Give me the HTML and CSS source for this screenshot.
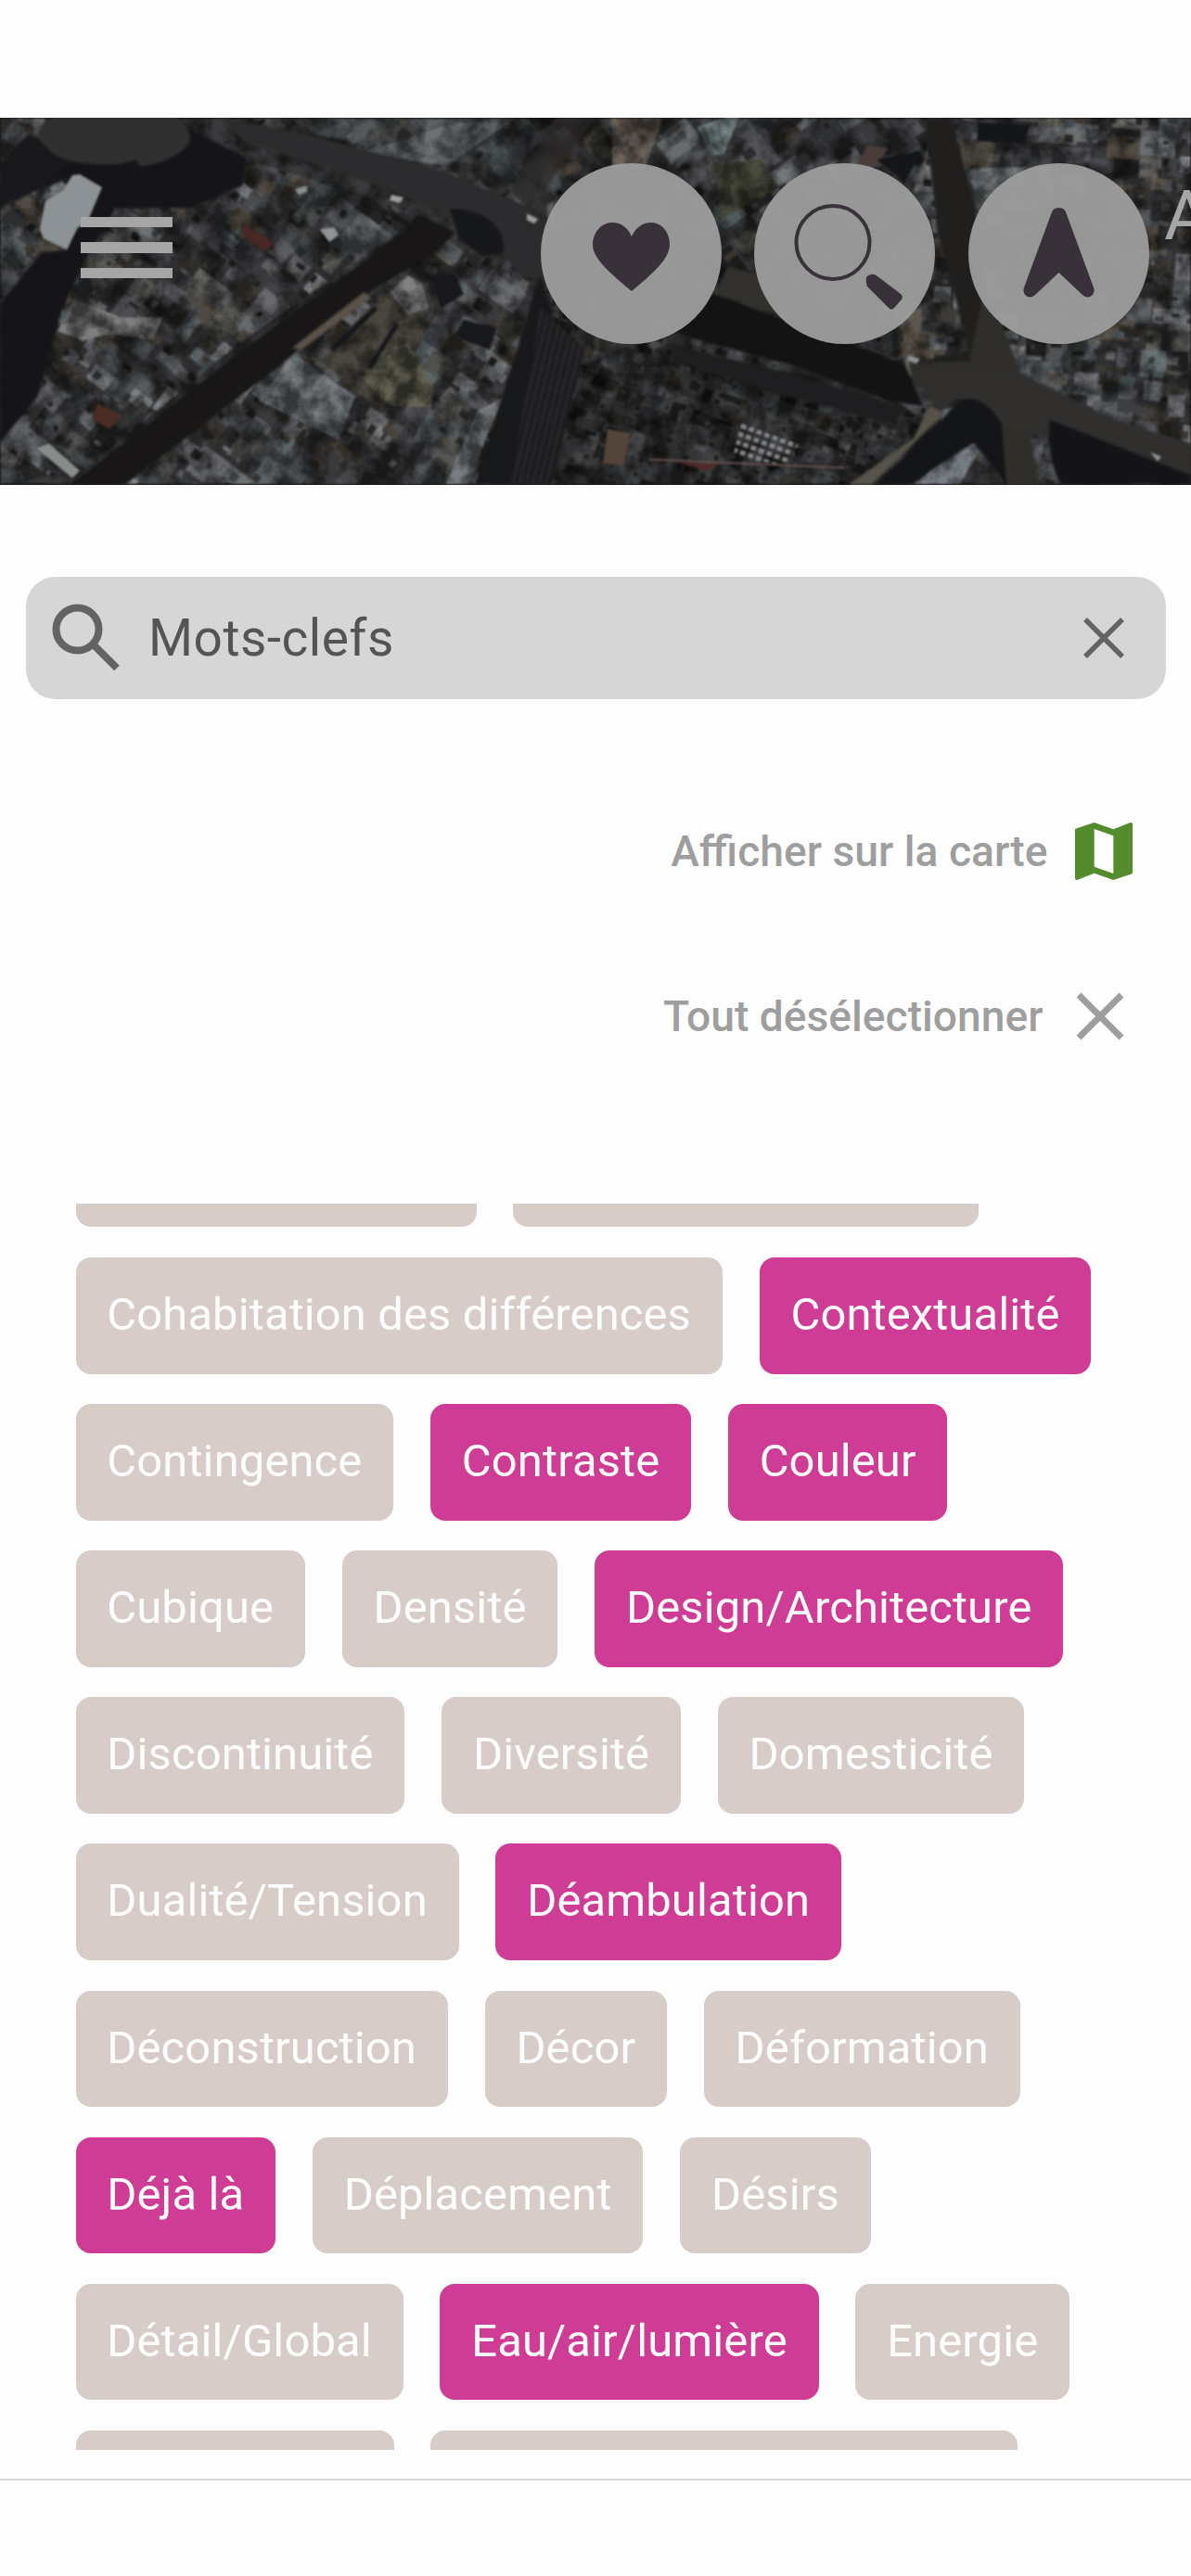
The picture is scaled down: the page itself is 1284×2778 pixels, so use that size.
FILE: index.html
```html
<!DOCTYPE html>
<html lang="fr">

<head>
  <meta charset="UTF-8" />
  <meta name="viewport" content="width=device-width, initial-scale=1.0" />
  <title>Mots-clefs</title>
  <link rel="stylesheet" href="styles.css">
</head>

<body>
  <header class="banner">
    <!-- aerial view behind the toolbar -->
    <svg class="banner-map" viewBox="0 0 1284 395" preserveAspectRatio="none" aria-hidden="true">
      <defs>
        <filter id="grain" x="0" y="0" width="100%" height="100%" color-interpolation-filters="sRGB">
          <feGaussianBlur in="SourceGraphic" stdDeviation="1.3" result="soft" />
          <feTurbulence type="fractalNoise" baseFrequency="0.04" numOctaves="4" seed="4" />
          <feColorMatrix values="2.6 0 0 0 -.8  2.6 0 0 0 -.8  2.6 0 0 0 -.8  0 0 0 0 1" result="noise" />
          <feComposite in="soft" in2="noise" operator="arithmetic" k1="0.8" k2="0.62" />
          <feComposite in2="soft" operator="in" />
        </filter>
        <pattern id="tracks" width="7" height="20" patternUnits="userSpaceOnUse" patternTransform="rotate(14)">
          <rect width="3" height="20" fill="#29292b" />
        </pattern>
        <pattern id="windows" width="9" height="9" patternUnits="userSpaceOnUse" patternTransform="rotate(20)">
          <rect width="6" height="5" fill="#85878a" />
        </pattern>
        <clipPath id="blockWest">
          <path d="M268 45L455 106 255 245 90 380 0 395V0H90L130 90 205 98z" />
        </clipPath>
        <clipPath id="blockSouth">
          <path d="M300 262L480 130 600 150 535 395H120z" />
        </clipPath>
        <clipPath id="blockNorth">
          <path d="M240 0H1010V150L960 250 760 190 600 120z" />
        </clipPath>
        <clipPath id="blockStation">
          <path d="M600 170L760 190 985 268 1010 310 940 395H545z" />
        </clipPath>
        <clipPath id="blockEast">
          <path d="M1010 0H1284V395H1090L960 300 940 220z" />
        </clipPath>
      </defs>

      <g filter="url(#grain)">
        <rect width="1284" height="395" fill="#29292b" />
        <g id="roofs"></g>

        <!-- large roofs -->
        <path d="M310 0H556L486 50 340 18z" fill="#404345" opacity=".6" />
        <path d="M490 5L550 5 480 52 390 38z" fill="#4b4f52" />
        <path d="M315 253L383 300 365 347 280 305z" fill="#54585b" />
        <path d="M430 170L462 178 455 240 415 320 345 262z" fill="#35322d" />
        <path d="M406 252L440 243 468 290 465 312 420 310 390 280z" fill="#46453b" />
        <path d="M80 195L130 215 175 215 165 240 120 232 90 240 62 230z" fill="#59595a" />
        <path d="M440 170L455 178 462 205 440 212 420 188z" fill="#5a5b5c" />
        <path d="M365 127L395 105 420 125 385 155z" fill="#4b4e51" />
        <path d="M545 300L530 330 505 395H480L515 315z" fill="#56595c" />
        <path d="M660 0L715 0 695 55 660 60z" fill="#4d4640" />
        <path d="M752 10L800 -8 780 40 765 40z" fill="#566062" />
        <path d="M770 50L820 45 840 75 775 110z" fill="#32342a" />
        <path d="M1045 55L1130 52 1140 95 1055 105z" fill="#54585a" />
        <path d="M985 395L1035 350 1060 350 1035 395z" fill="#54585d" />
      </g>

      <!-- avenues -->
      <g class="avenues">
        <path d="M240 0L340 20 480 58 590 105 640 175 760 190 765 225 560 170 520 120 400 70 262 25z" fill="#2c2c2e" />
        <path d="M600 0H640L590 75 590 115 550 80z" fill="#2a2725" opacity=".75" />
        <path d="M88 386L262 250 381 163 455 106 491 123 470 145 393 190 303 266 135 395H75z" fill="#181616" />
        <path d="M315 248L392 188 400 193 325 250z" fill="#5b534a" />
        <path d="M358 250L405 205M398 270L428 222" stroke="#141519" stroke-width="5" />
        <path d="M0 50L30 18 66 30 92 58 0 95z" fill="#18181b" />
        <path d="M62 60L85 40 200 10 265 43 262 73 205 97 125 97 90 155 66 210 40 300 0 350V200L45 145 72 142 95 75z" fill="#151519" />
        <path d="M40 20C45-25 200-25 205 20 206 37 170 52 150 52L147 45 130 50C80 51 60 48 40 20z" fill="#2f302f" />
        <path d="M485 98C520 98 545 115 543 145L520 150 495 130z" fill="#161719" />
        <path d="M582 170L596 210 552 395H512L545 290z" fill="#17181a" />
        <path d="M583 205L630 250 595 395H550z" fill="#1b1b1d" />
        <path d="M583 205L630 250 595 395H550z" fill="url(#tracks)" />
        <path d="M765 188L880 230 975 265 995 310 960 305 850 265 720 230 750 205z" fill="#131314" />
        <path d="M725 245L850 275 975 312 965 330 850 300 725 262z" fill="#1e1e20" />
        <path d="M785 160L850 180 930 225 900 232 770 190z" fill="#33312d" />
        <path d="M998 0H1025L1050 90 1062 180 1078 260 985 265 1045 250 1010 120z" fill="#211f1d" />
        <path d="M1062 180L1095 260 1120 395H1085L1065 300 985 290 980 265 1045 262z" fill="#2f2e2b" />
        <path d="M990 268L1100 275 1200 325 1284 350V385L1080 330 1035 300 1010 320z" fill="#302f2d" />
        <path d="M1030 310C1045 292 1070 310 1080 330L1085 395 1050 350 980 395H945z" fill="#141519" />
        <path d="M1132 325L1284 385V395H1145C1130 375 1130 340 1132 325z" fill="#141418" />
        <path d="M1002 310L1018 318 940 395H915L985 345z" fill="#57534a" />
      </g>

      <!-- courtyards and bright spots -->
      <g class="spots">
        <path d="M86 61L110 75 93 115 84 118 72 142 47 130 43 120 49 90 68 78 78 62z" fill="#8c9295" />
        <path d="M53 351L86 380 78 388 39 356z" fill="#8a8c8c" />
        <path d="M345 120L360 118 365 126 355 134z" fill="#8f9494" />
        <path d="M422 83L435 86 431 92 420 89zM568 103L580 109 576 114 568 110z" fill="#9a9b9a" />
        <path d="M318 77L331 73 331 80 322 83z" fill="#8a8d90" />
        <path d="M263 115L295 135 285 143 260 125z" fill="#4a2826" />
        <path d="M105 308L132 320 118 335 100 325z" fill="#4b2d25" />
        <path d="M935 30L957 33 945 52 925 50z" fill="#4c3d3a" />
        <path d="M655 335L680 340 672 375 650 372z" fill="#54453a" />
        <path d="M465 170L490 168 500 190 475 205zM500 218L535 226 528 250 490 235z" fill="#17181b" />
        <path d="M1055 5L1110 8 1105 28 1053 25zM945 45L995 35 975 70z" fill="#151619" />
        <path d="M800 325L862 348 850 375 790 365z" fill="url(#windows)" />
        <path d="M980 256L992 260 988 265 978 261zM1240 360L1252 365 1248 370z" fill="#8f9292" />
        <path d="M700 368L910 377" stroke="#66514e" stroke-width="2" />
        <path d="M730 371L775 373 762 380z" fill="#522a2a" />
      </g>
    </svg>

    <div class="toolbar">
      <button class="menu-btn" aria-label="Menu">
        <span></span>
        <span></span>
        <span></span>
      </button>

      <div class="actions">
        <button class="round-btn" aria-label="Favoris">
          <svg viewBox="0 0 195 195">
            <path d="M98 138C79 122 56 104 56 88C56 75 65 64 77 64C87 64 94 70 98 79C102 70 109 64 119 64C131 64 139 75 139 88C139 104 117 122 98 138Z" />
          </svg>
        </button>
        <button class="round-btn" aria-label="Rechercher">
          <svg viewBox="0 0 195 195">
            <circle class="lens" cx="85" cy="85.5" r="39.5" />
            <path d="M121 129Q119 121 126 120Q130 119 133 122L158 141Q161 144 159 147L151 156Q148 159 145 156L123 134Q121 132 121 129Z" />
          </svg>
        </button>
        <button class="round-btn" aria-label="Position">
          <svg viewBox="0 0 195 195">
            <path d="M89.500 54Q91 48 97.500 48Q104 48 105.500 54L135 134Q137 140 132 143.500Q127 146 123 142L97.500 118L72 142Q68 146 63 143.500Q58 140 60 134Z" />
          </svg>
        </button>
      </div>

      <span class="tab-label">A</span>
    </div>
  </header>

  <main>
    <div class="search-bar">
      <svg class="search-icon" viewBox="0 0 74 74">
        <circle cx="27.500" cy="27.500" r="23" />
        <path d="M46 45.500L70 69.500" />
      </svg>
      <span class="search-text">Mots-clefs</span>
      <svg class="clear-icon" viewBox="0 0 44 44">
        <path d="M2 2L42 42M42 2L2 42" />
      </svg>
    </div>

    <div class="links">
      <div class="link">
        <span>Afficher sur la carte</span>
        <svg class="map-icon" viewBox="3 3 18 18">
          <path d="M20.500 3l-.16.03L15 5.100 9 3 3.360 4.900c-.21.07-.36.25-.36.48V20.500c0 .28.22.5.5.5l.16-.03L9 18.900l6 2.100 5.640-1.900c.21-.07.36-.25.36-.48V3.500c0-.28-.22-.5-.5-.5zM15 19l-6-2.110V5l6 2.110V19z" />
        </svg>
      </div>
      <div class="link link-reset">
        <span>Tout désélectionner</span>
        <svg class="cross-icon" viewBox="0 0 52 52">
          <path d="M3 3L49 49M49 3L3 49" />
        </svg>
      </div>
    </div>

    <div class="keywords">
      <div class="chips">
        <span class="chip chip-a"></span>
        <span class="chip chip-b"></span>
        <span class="chip">Cohabitation des différences</span>
        <span class="chip selected">Contextualité</span>
        <span class="chip">Contingence</span>
        <span class="chip selected">Contraste</span>
        <span class="chip selected">Couleur</span>
        <span class="chip">Cubique</span>
        <span class="chip">Densité</span>
        <span class="chip selected">Design/Architecture</span>
        <span class="chip">Discontinuité</span>
        <span class="chip">Diversité</span>
        <span class="chip">Domesticité</span>
        <span class="chip">Dualité/Tension</span>
        <span class="chip selected">Déambulation</span>
        <span class="chip">Déconstruction</span>
        <span class="chip">Décor</span>
        <span class="chip">Déformation</span>
        <span class="chip selected">Déjà là</span>
        <span class="chip">Déplacement</span>
        <span class="chip">Désirs</span>
        <span class="chip">Détail/Global</span>
        <span class="chip selected">Eau/air/lumière</span>
        <span class="chip">Energie</span>
        <span class="chip chip-c"></span>
        <span class="chip chip-d"></span>
      </div>
    </div>
  </main>

  <script src="roofs.js"></script>
</body>

</html>
```
FILE: styles.css
```css
* {
  box-sizing: border-box;
}

body {
  font-family: Roboto, sans-serif;
  margin: 0;
  padding-top: 127px;
  background: #fefefe;
  height: 2778px;
  overflow: hidden;
}

button {
  border: none;
  padding: 0;
  background: none;
}

.banner {
  position: relative;
  height: 395.5px;
  overflow: hidden;
  background: #222;
}

.banner-map {
  position: absolute;
  inset: 0;
  width: 100%;
  height: 100%;
}

.avenues {
  filter: blur(1.5px);
}

.spots {
  filter: blur(0.8px);
}

.toolbar {
  position: relative;
  display: flex;
  align-items: flex-start;
  width: 1400px;
  padding: 49px 0 0 87px;
}

.menu-btn {
  display: flex;
  flex-direction: column;
  gap: 16px;
  width: 99px;
  margin-top: 58px;
}

.menu-btn span {
  height: 11.4px;
  background: #a6a6a6;
}

.actions {
  display: flex;
  gap: 35.7px;
  margin-left: 396.6px;
}

.round-btn {
  width: 195px;
  height: 195px;
  border-radius: 50%;
  background: rgba(157, 157, 157, 0.95);
}

.round-btn svg {
  display: block;
  fill: #38313a;
}

.round-btn .lens {
  fill: none;
  stroke: #38313a;
  stroke-width: 4;
}

.tab-label {
  margin: 12px 0 0 16px;
  font-size: 75px;
  line-height: 88px;
  color: #a6a6a6;
}

.search-bar {
  display: flex;
  align-items: center;
  height: 132px;
  margin: 99px 27px 0 28px;
  padding: 0 45px 0 28px;
  border-radius: 32px;
  background: #d6d6d6;
}

.search-icon {
  width: 74px;
  height: 74px;
  fill: none;
  stroke: #636363;
  stroke-width: 8;
}

.search-text {
  flex: 1;
  margin-left: 30px;
  font-size: 55px;
  letter-spacing: 0.5px;
  color: #545454;
}

.clear-icon {
  width: 44px;
  height: 44px;
  fill: none;
  stroke: #636363;
  stroke-width: 5.5;
}

.links {
  display: flex;
  flex-direction: column;
  gap: 96px;
  padding: 123px 63px 0 0;
}

.link {
  display: flex;
  justify-content: flex-end;
  align-items: center;
  height: 82px;
  font-size: 46.2px;
  font-weight: 500;
  color: #9e9e9e;
}

.link-reset {
  padding-right: 9px;
}

.map-icon {
  width: 62px;
  height: 62px;
  margin-left: 29.5px;
  fill: #548b2d;
}

.cross-icon {
  width: 52px;
  height: 52px;
  margin-left: 35.5px;
  fill: none;
  stroke: #9e9e9e;
  stroke-width: 7;
}

.keywords {
  height: 1377px;
  margin-top: 161px;
  padding: 0 82px 0 81.5px;
  border-bottom: 2px solid #dadada;
}

/* scrolled list, cut at both ends */
.chips {
  display: flex;
  flex-wrap: wrap;
  align-content: flex-end;
  gap: 32.6px 39.8px;
  height: 1344.8px;
  overflow: hidden;
}

.chip {
  height: 125.5px;
  padding: 0 33.8px;
  border-radius: 16px;
  background: #d7ccc8;
  font-size: 48.9px;
  line-height: 124px;
  letter-spacing: 0.15px;
  white-space: nowrap;
  color: #fefefe;
}

.chip.selected {
  background: #cf3c95;
}

.chip-a {
  width: 432px;
  margin-top: -100.5px;
}

.chip-b {
  width: 501.5px;
  margin-top: -100.5px;
}

.chip-c {
  width: 343px;
  margin-bottom: -104px;
}

.chip-d {
  width: 633px;
  margin-bottom: -104px;
}
```
FILE: roofs.js
```javascript
// Fills each city block with small roofs, laid on a grid turned to the street angle
const SVG_NS = 'http://www.w3.org/2000/svg';
const roofs = document.getElementById('roofs');

const blocks = [
  { clip: 'blockWest', angle: 38, size: 25, light: 0.9 },
  { clip: 'blockSouth', angle: 36, size: 28, light: 0.92 },
  { clip: 'blockNorth', angle: -35, size: 34, light: 0.8 },
  { clip: 'blockStation', angle: 20, size: 14, light: 0.6 },
  { clip: 'blockEast', angle: 4, size: 26, light: 0.98 },
];

const tones = [
  [34, 34, 35], [42, 40, 37], [62, 64, 67], [70, 72, 74], [78, 79, 82],
  [68, 74, 77], [74, 73, 70], [62, 57, 51], [90, 92, 94], [52, 53, 56],
];

// fixed seed, so the map is the same on every load
let seed = 71;
function random() {
  seed = (seed * 16807) % 2147483647;
  return seed / 2147483647;
}

function addRoofs(grid, size, light, scale) {
  for (let y = -500; y < 900; y += size) {
    for (let x = -200; x < 1500; x += size) {
      const tone = tones[Math.floor(random() * tones.length)];
      const shade = light * (0.8 + random() * 0.35);
      const rect = document.createElementNS(SVG_NS, 'rect');
      rect.setAttribute('x', x + random() * size * 0.5);
      rect.setAttribute('y', y + random() * size * 0.5);
      rect.setAttribute('width', size * scale * (0.5 + random() * 1.2));
      rect.setAttribute('height', size * scale * (0.4 + random() * 0.9));
      rect.setAttribute('fill', 'rgb(' + tone.map((c) => Math.round(c * shade)).join(',') + ')');
      grid.appendChild(rect);
    }
  }
}

blocks.forEach(function (block) {
  const clipped = document.createElementNS(SVG_NS, 'g');
  clipped.setAttribute('clip-path', 'url(#' + block.clip + ')');
  const grid = document.createElementNS(SVG_NS, 'g');
  grid.setAttribute('transform', 'rotate(' + block.angle + ' 642 197)');

  // wide roofs first, then chimneys and yards on top
  addRoofs(grid, block.size, block.light, 1.1);
  addRoofs(grid, block.size * 0.8, block.light * 0.85, 0.35);

  clipped.appendChild(grid);
  roofs.appendChild(clipped);
});
```
